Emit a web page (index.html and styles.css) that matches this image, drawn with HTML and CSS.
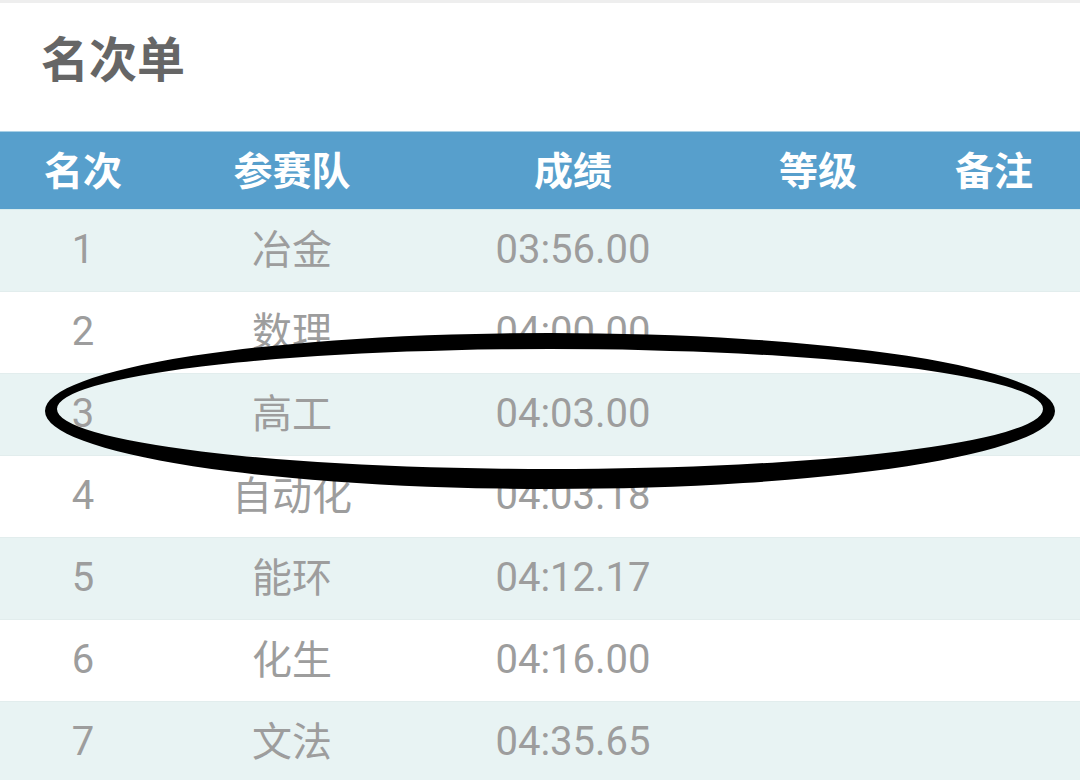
FILE: index.html
```html
<!DOCTYPE html>
<html lang="zh-CN">
<head>
    <meta charset="UTF-8">
    <meta name="viewport" content="width=device-width, initial-scale=1.0">
    <title>名次单</title>
    <link rel="stylesheet" href="styles.css">
</head>
<body>

<div class="pagina">
    <!-- Título -->
    <h2 class="titulo">名次单</h2>

    <!-- Tabela de resultados -->
    <div class="tabela">
        <div class="linha cabecalho">
            <div>名次</div>
            <div>参赛队</div>
            <div>成绩</div>
            <div>等级</div>
            <div>备注</div>
        </div>
        <div class="linha par">
            <div class="num">1</div><div>冶金</div><div class="num">03:56.00</div><div></div><div></div>
        </div>
        <div class="linha">
            <div class="num">2</div><div>数理</div><div class="num">04:00.00</div><div></div><div></div>
        </div>
        <div class="linha par">
            <div class="num">3</div><div>高工</div><div class="num">04:03.00</div><div></div><div></div>
        </div>
        <div class="linha">
            <div class="num">4</div><div>自动化</div><div class="num">04:03.18</div><div></div><div></div>
        </div>
        <div class="linha par">
            <div class="num">5</div><div>能环</div><div class="num">04:12.17</div><div></div><div></div>
        </div>
        <div class="linha">
            <div class="num">6</div><div>化生</div><div class="num">04:16.00</div><div></div><div></div>
        </div>
        <div class="linha par">
            <div class="num">7</div><div>文法</div><div class="num">04:35.65</div><div></div><div></div>
        </div>

        <!-- Marcação à mão por cima da tabela -->
        <svg class="circulo" width="1080" height="200" viewBox="0 0 1080 200">
            <path fill-rule="evenodd" fill="#000"
                  d="M45 78 A505 78 0 1 0 1055 78 A505 78 0 1 0 45 78 Z
                     M57 76 A493 60 0 1 1 1043 76 A493 60 0 1 1 57 76 Z"/>
        </svg>
    </div>
</div>

</body>
</html>
```

FILE: styles.css
```css
/* Estilos gerais */
body {
    margin: 0;
    background: #fff;
    font-family: Roboto, "Noto Sans CJK SC", sans-serif;
}

.pagina {
    width: 1080px;
    height: 780px;
    overflow: hidden;
    border-top: 3px solid #eeeeee;
    box-sizing: border-box;
}

.titulo {
    margin: 0;
    height: 128px;
    padding-left: 41px;
    padding-top: 25px;
    box-sizing: border-box;
    font-family: "Noto Sans CJK SC", sans-serif;
    font-size: 48px;
    font-weight: bold;
    line-height: 1.2;
    color: #666;
}

/* Tabela */
.tabela {
    position: relative;
}

.linha {
    display: grid;
    grid-template-columns: 166px 252px 310px 180px 172px;
    height: 82px;
    align-items: center;
    text-align: center;
    font-size: 40px;
    color: #9d9d9d;
    background: #fff;
    border-bottom: 1px solid #e2eded;
    box-sizing: border-box;
}

.linha div {
    font-family: "Noto Sans CJK SC", sans-serif;
    line-height: 1;
    padding-bottom: 8px;
}

.linha .num {
    font-family: Roboto, sans-serif;
    padding-bottom: 2px;
}

.linha.par {
    background: #e8f3f3;
}

.cabecalho {
    height: 79px;
    background: #579fcc;
    color: #fff;
    border-bottom: 1px solid #d6ecef;
    border-top: 1px solid #a9d0e6;
}

.cabecalho div {
    font-weight: bold;
    font-size: 39px;
    padding-bottom: 4px;
}

.circulo {
    position: absolute;
    left: 0;
    top: 202px;
}
```
